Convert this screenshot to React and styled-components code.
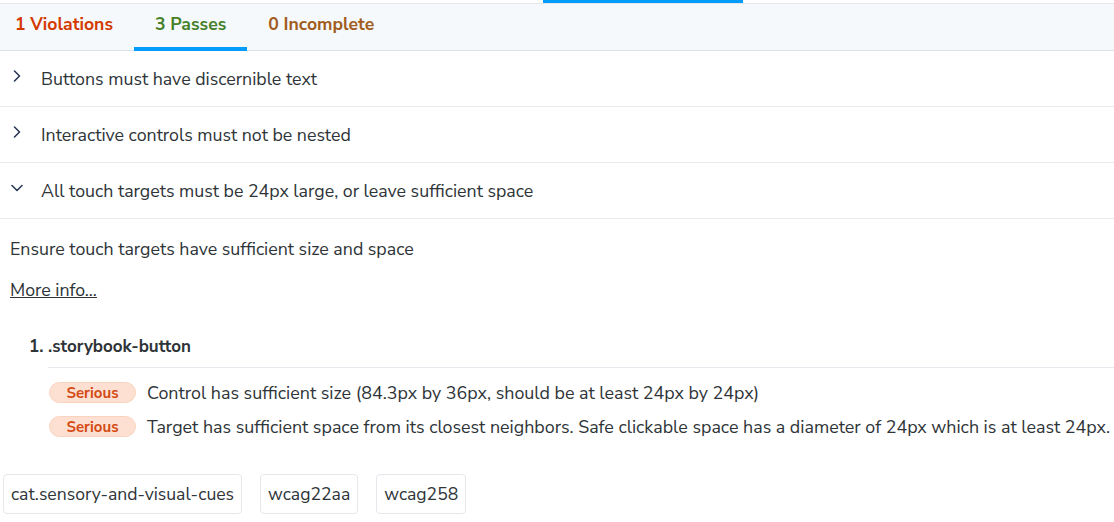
import React from "react";
import styled, { createGlobalStyle } from "styled-components";

const GlobalStyle = createGlobalStyle`
  body {
    margin: 0;
    background: #ffffff;
    font-family: "Nunito Sans", "Lato", "Noto Sans", sans-serif;
    color: #2e3438;
  }
`;

const Page = styled.div`
  width: 1114px;
  height: 522px;
  overflow: hidden;
`;

const TopStrip = styled.div`
  display: flex;
  height: 3px;
`;

const TopIndicator = styled.div`
  width: 200px;
  height: 3px;
  margin-left: 543px;
  background: #029cfd;
`;

const TabBar = styled.div`
  display: flex;
  height: 46px;
  background: #f6f9fc;
  border-top: 1px solid #e3e7eb;
  border-bottom: 1px solid #dde3ea;
`;

const Tab = styled.div`
  display: flex;
  align-items: center;
  padding: ${(p) => (p.first ? "0 21px 4px 15px" : "0 21px 4px")};
  font-size: 17.6px;
  font-weight: 700;
  color: ${(p) => p.color};
  border-bottom: 4px solid ${(p) => (p.active ? "#029cfd" : "transparent")};
  margin-bottom: -1px;
  box-sizing: border-box;
`;

const Row = styled.div`
  display: flex;
  align-items: center;
  height: 55px;
  border-bottom: 1px solid #e6e9ed;
  font-size: 17.8px;
  color: #2e3438;
`;

const ChevronBox = styled.div`
  width: 41px;
  display: flex;
  justify-content: center;
  padding-right: 7px;
  box-sizing: border-box;
  margin-top: -6px;
`;

const Details = styled.div`
  padding: 18px 10px 0 10px;
  font-size: 17.8px;
`;

const Description = styled.p`
  margin: 0;
  line-height: 24px;
`;

const MoreInfo = styled.a`
  display: inline-block;
  margin-top: 17px;
  line-height: 24px;
  color: #2e3438;
  text-decoration: underline;
`;

const ElementList = styled.ol`
  margin: 33px 0 0 0;
  padding: 0 0 0 38px;
`;

const ElementItem = styled.li`
  font-weight: 700;
  font-size: 17px;
  line-height: 24px;
`;

const ElementTitle = styled.div`
  line-height: 24px;
  padding-bottom: 8px;
  border-bottom: 1px solid #e6e9ed;
  margin-right: -10px;
`;

const CheckList = styled.div`
  display: flex;
  flex-direction: column;
  gap: 13px;
  padding-top: 14px;
  margin-left: 1px;
`;

const CheckRow = styled.div`
  display: flex;
  align-items: center;
  gap: 11px;
  height: 21px;
  font-size: 17.86px;
  font-weight: 400;
  white-space: nowrap;
`;

const Badge = styled.span`
  display: inline-flex;
  align-items: center;
  justify-content: center;
  flex: none;
  width: 87px;
  height: 21px;
  box-sizing: border-box;
  border-radius: 11px;
  background: #fde0d1;
  border: 1px solid #f9d3bd;
  color: #d34a13;
  font-size: 15px;
  font-weight: 700;
`;

const TagRow = styled.div`
  display: flex;
  gap: 18px;
  margin: 37px 0 0 -7px;
`;

const Tag = styled.span`
  display: inline-flex;
  align-items: center;
  height: 40px;
  box-sizing: border-box;
  padding: 0 7px;
  border: 1px solid #e4e8ec;
  border-radius: 4px;
  font-size: 17.6px;
  color: #2e3438;
`;

const Chevron = ({ open }) => (
  <svg width="12" height="12" viewBox="0 0 12 12" fill="none">
    <path
      d={open ? "M1 3.5 L6 8.5 L11 3.5" : "M3.5 1 L8.5 6 L3.5 11"}
      stroke="#2b3a55"
      strokeWidth="1.6"
      strokeLinecap="round"
      strokeLinejoin="round"
    />
  </svg>
);

const rules = [
  { title: "Buttons must have discernible text", open: false },
  { title: "Interactive controls must not be nested", open: false },
  { title: "All touch targets must be 24px large, or leave sufficient space", open: true },
];

const checks = [
  "Control has sufficient size (84.3px by 36px, should be at least 24px by 24px)",
  "Target has sufficient space from its closest neighbors. Safe clickable space has a diameter of 24px which is at least 24px.",
];

const tags = ["cat.sensory-and-visual-cues", "wcag22aa", "wcag258"];

export default function App() {
  return (
    <Page>
      <GlobalStyle />
      <TopStrip>
        <TopIndicator />
      </TopStrip>
      <TabBar>
        <Tab first color="#d43900">1 Violations</Tab>
        <Tab active color="#448028">3 Passes</Tab>
        <Tab color="#a15c20">0 Incomplete</Tab>
      </TabBar>
      {rules.map((r) => (
        <Row key={r.title}>
          <ChevronBox>
            <Chevron open={r.open} />
          </ChevronBox>
          {r.title}
        </Row>
      ))}
      <Details>
        <Description>Ensure touch targets have sufficient size and space</Description>
        <MoreInfo href="#">More info...</MoreInfo>
        <ElementList>
          <ElementItem>
            <ElementTitle>.storybook-button</ElementTitle>
            <CheckList>
              {checks.map((c) => (
                <CheckRow key={c}>
                  <Badge>Serious</Badge>
                  {c}
                </CheckRow>
              ))}
            </CheckList>
          </ElementItem>
        </ElementList>
        <TagRow>
          {tags.map((t) => (
            <Tag key={t}>{t}</Tag>
          ))}
        </TagRow>
      </Details>
    </Page>
  );
}
